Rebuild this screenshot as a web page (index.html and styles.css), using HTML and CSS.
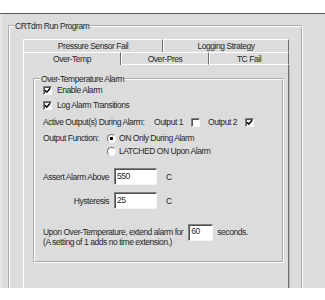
FILE: index.html
```html
<!DOCTYPE html>
<html>
<head>
<meta charset="utf-8">
<link rel="stylesheet" href="styles.css">
</head>
<body>
<div class="window">
  <fieldset class="outer">
    <legend class="outer-legend">CRTdm Run Program</legend>
    <div class="tabs">
      <div class="tabrow back">
        <div class="tab w140">Pressure Sensor Fail</div>
        <div class="tab w126">Logging Strategy</div>
      </div>
      <div class="tabrow front">
        <div class="tab sel w98">Over-Temp</div>
        <div class="tab w88">Over-Pres</div>
        <div class="tab w80">TC Fail</div>
      </div>
      <div class="panel">
        <fieldset class="inner">
          <legend class="inner-legend">Over-Temperature Alarm</legend>
          <div class="row r1"><span class="check on"><svg viewBox="0 0 7 7" width="7" height="7"><path d="M1 3.2 L2.8 5.2 L6.2 1.2" fill="none" stroke="#000" stroke-width="1.5"/></svg></span><span class="cl">Enable Alarm</span></div>
          <div class="row r2"><span class="check on"><svg viewBox="0 0 7 7" width="7" height="7"><path d="M1 3.2 L2.8 5.2 L6.2 1.2" fill="none" stroke="#000" stroke-width="1.5"/></svg></span><span class="cl">Log Alarm Transitions</span></div>
          <div class="row r3"><span class="act">Active Output(s) During Alarm:</span><span class="o1">Output 1</span><span class="check"></span><span class="o2">Output 2</span><span class="check"><svg viewBox="0 0 7 7" width="7" height="7"><path d="M1 3.2 L2.8 5.2 L6.2 1.2" fill="none" stroke="#000" stroke-width="1.5"/></svg></span></div>
          <div class="row r4"><span class="fn">Output Function:</span><span class="radio sel"></span><span class="rl">ON Only During Alarm</span></div>
          <div class="row r5"><span class="fn"></span><span class="radio"></span><span class="rl">LATCHED ON Upon Alarm</span></div>
          <div class="row r6"><span class="lbl">Assert Alarm Above</span><input class="field w43" value="550"><span class="unit">C</span></div>
          <div class="row r7"><span class="lbl right">Hysteresis</span><input class="field w43" value="25"><span class="unit">C</span></div>
          <div class="note">
            <div class="nline">Upon Over-Temperature, extend alarm for<input class="field w25" value="60"><span class="sec">seconds.</span></div>
            <div class="nline2">(A setting of 1 adds no time extension.)</div>
          </div>
        </fieldset>
      </div>
    </div>
  </fieldset>
</div>
</body>
</html>
```
FILE: styles.css
```css
html, body {
  margin: 0;
  padding: 0;
  background: #fff;
}
body {
  width: 325px;
  height: 300px;
  overflow: hidden;
  font-family: "Liberation Sans", Arial, sans-serif;
  font-size: 8.5px;
  letter-spacing: -0.45px;
  color: #262626;
}
.window {
  margin-top: 13px;
  height: 275px;
  border-top: 1px solid #5a5a5a;
  background: #dcdcdc;
  overflow: hidden;
  box-sizing: border-box;
  box-shadow: inset 2px 0 0 #e6e6e6;
}
.outer {
  margin: 7px 0 0 8px;
  width: 295px;
  height: 320px;
  box-sizing: border-box;
  border: 2px groove #fff;
  padding: 0;
  min-width: 0;
}
.outer-legend {
  margin-left: 4px;
  padding: 0 1px;
  line-height: 10px;
}
.tabs {
  margin: 8px 0 0 13px;
  width: 266px;
}
.tabrow {
  display: flex;
}
.tabrow.back { height: 13px; }
.tabrow.front { height: 13px; }
.tab {
  box-sizing: border-box;
  display: flex;
  align-items: center;
  justify-content: center;
  border-top: 1px solid #fff;
  border-left: 1px solid #fff;
  border-right: 1px solid #6e6e6e;
}
.front .tab {
  border-bottom: 1px solid #fff;
}
.front .tab.sel {
  border-bottom: 0;
  padding-bottom: 1px;
}
.w140 { width: 140px; }
.w126 { width: 126px; }
.w98 { width: 98px; }
.w88 { width: 88px; }
.w80 { width: 80px; }
.panel {
  border-left: 1px solid #fff;
  border-right: 1px solid #6e6e6e;
  box-shadow: 1px 0 0 #bdbdbd;
  height: 260px;
  padding-top: 9px;
  box-sizing: border-box;
}
.inner {
  margin: 0 4px 0 9px;
  height: 189px;
  box-sizing: border-box;
  border: 2px groove #fff;
  padding: 0 0 0 8px;
  min-width: 0;
}
.inner-legend {
  margin-left: -3px;
  padding: 0 1px;
  line-height: 10px;
}
.row {
  display: flex;
  align-items: center;
  height: 12px;
  white-space: nowrap;
}
.r1 { margin-top: 0; }
.r2 { margin-top: 3px; }
.r3 { margin-top: 5px; }
.r4 { margin-top: 4px; }
.r5 { margin-top: 1px; }
.r6 { margin-top: 11px; height: 17px; }
.r7 { margin-top: 7px; height: 17px; }
.check {
  box-sizing: border-box;
  width: 9px;
  height: 9px;
  background: #fff;
  border: 1px solid;
  border-color: #808080 #f4f4f4 #f4f4f4 #808080;
  box-shadow: inset 1px 1px 0 #505050;
  display: flex;
  align-items: center;
  justify-content: center;
  flex: none;
}
.check svg { display: block; }
.cl { margin-left: 5px; }
.act { width: 103px; flex: none; }
.o1 { margin-left: 8px; width: 37px; }
.o2 { margin-left: 8px; width: 37px; }
.fn { width: 64px; flex: none; }
.radio {
  box-sizing: border-box;
  width: 9px;
  height: 9px;
  border-radius: 50%;
  border: 1px solid;
  border-color: #707070 #f4f4f4 #f4f4f4 #707070;
  background: #fff;
  flex: none;
}
.radio.sel {
  background: radial-gradient(circle, #000 0 1.4px, #fff 2px);
}
.rl { margin-left: 3px; }
.lbl { width: 71px; flex: none; }
.lbl.right { text-align: right; box-sizing: border-box; padding-right: 5px; }
.field {
  box-sizing: border-box;
  height: 17px;
  margin: 0;
  padding: 0 2px 2px;
  background: #fff;
  border: 1px solid;
  border-color: #808080 #f4f4f4 #f4f4f4 #808080;
  box-shadow: inset 1px 1px 0 #505050;
  font: inherit;
  letter-spacing: inherit;
  color: #262626;
  outline: none;
  flex: none;
}
.w43 { width: 43px; }
.w25 { width: 25px; }
.unit { margin-left: 9px; }
.note {
  margin-top: 18px;
}
.nline {
  display: flex;
  align-items: center;
  height: 10px;
  white-space: nowrap;
}
.nline .field { margin-left: 5px; }
.sec { margin-left: 4px; }
.nline2 {
  line-height: 10px;
  white-space: nowrap;
}
```
